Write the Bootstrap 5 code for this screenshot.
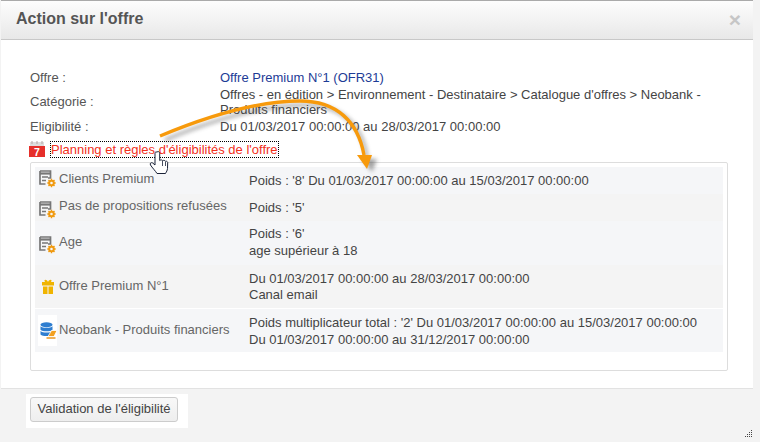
<!DOCTYPE html>
<html lang="fr">
<head>
<meta charset="utf-8">
<title>Action sur l'offre</title>
<link href="https://cdn.jsdelivr.net/npm/bootstrap@5.3.0/dist/css/bootstrap.min.css" rel="stylesheet">
<style>
html,body{height:100%;}
body{background:#f3f3f3;font-family:"Liberation Sans",Arial,sans-serif;font-size:13px;line-height:15px;color:#444;overflow:hidden;}
.stage{position:relative;width:760px;height:442px;overflow:hidden;}
.dlg{width:752px;margin-left:1px;}
.dlg-top{height:40px;border-top:1px solid #aaa;border-bottom:1px solid #c8c8c8;background:linear-gradient(#fdfdfd,#e8e8e8);padding:0 15px;}
.dlg-title{font-size:16px;font-weight:700;color:#555;line-height:36px;margin:0 0 2px;}
.dlg-x{font-size:21px;font-weight:700;color:#c6c6c6;line-height:1;margin:0 -3px 2px 0;}
.dlg-main{height:349px;background:#fff;padding:29px 25px 0 29px;border-bottom:1px solid #e2e2e2;}
.info-row{display:flex;align-items:center;}
.info-k{width:190px;color:#555;flex:none;}
.info-v{flex:1;}
.r1{height:16px;}
.r2{height:31px;margin-top:1px;}
.r3{height:16px;margin-top:1px;}
.offer{color:#1d3c96;}
.plan{margin-top:6px;height:18px;}
.cal{width:16px;height:17px;flex:none;margin:0 5px 0 -1px;}
.plan-link{color:#f2301c;text-decoration:none;outline:1px dotted #000;padding:0;line-height:15px;height:15px;white-space:nowrap;margin-left:1px;}
.box{margin-top:4px;height:209px;border:1px solid #ddd;border-radius:2px;padding:4px 4px 0 4px;}
.tr{display:flex;}
.tr-a{background:#f5f6f8;}
.tr-b{background:#f4f4f4;}
.h1r{height:27px;}
.h3r{height:44px;}
.h4r{height:43px;margin-bottom:1px;}
.tic{width:19px;flex:none;margin-left:3px;display:flex;align-items:center;justify-content:center;}
.tic-w{background:#fff;width:19px;height:31px;display:flex;align-items:center;padding-left:2px;}
.tic-w svg{flex:none;}
.tic-a{padding-bottom:3px;}
.tic-b{padding-top:4px;}
.tic-c{padding-top:3px;}
.tnm{width:192px;flex:none;padding:0 0 2px 2px;color:#666;display:flex;align-items:center;}
.tvl{flex:1;color:#444;display:flex;flex-direction:column;justify-content:center;}
.up{padding-bottom:4px;}
.up1{padding-bottom:4px;}
.raise{padding-bottom:3px;}
.gap-l{margin-top:2px;}
.gap-s{margin-top:1px;}
.dlg-foot{padding:5px 0 0 25px;}
.btn-wrap{display:inline-block;background:#fff;padding:3px 10px 6px 4px;line-height:0;}
.btn-val{font-size:13px;line-height:15px;color:#444;padding:3px 2px 5px;width:148px;height:25px;border:1px solid #ccc;border-radius:3px;background:linear-gradient(#f8f8f8,#eeeeee);white-space:nowrap;}
.over{position:absolute;left:0;top:0;pointer-events:none;}
</style>
</head>
<body>
<div class="stage">
  <div class="dlg">
    <div class="dlg-top d-flex justify-content-between align-items-center">
      <h1 class="dlg-title">Action sur l'offre</h1>
      <span class="dlg-x">×</span>
    </div>
    <div class="dlg-main">
      <div class="info-row r1"><div class="info-k">Offre :</div><div class="info-v offer">Offre Premium N°1 (OFR31)</div></div>
      <div class="info-row r2"><div class="info-k">Catégorie :</div><div class="info-v">Offres - en édition &gt; Environnement - Destinataire &gt; Catalogue d'offres &gt; Neobank - Produits financiers</div></div>
      <div class="info-row r3"><div class="info-k">Eligibilité :</div><div class="info-v">Du 01/03/2017 00:00:00 au 28/03/2017 00:00:00</div></div>
      <div class="d-flex align-items-center plan">
        <svg class="cal" viewBox="0 0 16 17"><rect x="1" y="1" width="14" height="4" fill="#ddd"/><path d="M3 0v3M8 0v3M13 0v3" stroke="#b5a5a5"/><rect y="5" width="16" height="11" fill="#e62f2a"/><text x="8" y="14.500" text-anchor="middle" fill="#fff" font-family="Liberation Sans" font-weight="700" font-size="10.500">7</text></svg>
        <a class="plan-link" href="#">Planning et règles d'éligibilités de l'offre</a>
      </div>
      <div class="box">
        <div class="tr tr-a h1r"><div class="tic tic-a"><svg width="18" height="18" viewBox="0 0 18 18"><use href="#doc"/></svg></div><div class="tnm up">Clients Premium</div><div class="tvl">Poids : '8' Du 01/03/2017 00:00:00 au 15/03/2017 00:00:00</div></div>
        <div class="tr tr-b h1r"><div class="tic tic-b"><svg width="18" height="18" viewBox="0 0 18 18"><use href="#doc"/></svg></div><div class="tnm up">Pas de propositions refusées</div><div class="tvl">Poids : '5'</div></div>
        <div class="tr tr-a h3r"><div class="tic tic-c"><svg width="18" height="18" viewBox="0 0 18 18"><use href="#doc"/></svg></div><div class="tnm up1">Age</div><div class="tvl raise"><div>Poids : '6'</div><div class="gap-l">age supérieur à 18</div></div></div>
        <div class="tr tr-b h4r"><div class="tic"><svg width="14" height="16" viewBox="0 0 14 16"><path d="M4 3C2 0 6 0 7 3c1-3 5-3 3 0z" fill="#f0b400"/><rect x="1" y="3" width="12" height="3.500" fill="#f0b400"/><rect x="2" y="7.500" width="4.500" height="7.500" fill="#f0b400"/><rect x="7.500" y="7.500" width="4.500" height="7.500" fill="#f0b400"/></svg></div><div class="tnm">Offre Premium N°1</div><div class="tvl"><div>Du 01/03/2017 00:00:00 au 28/03/2017 00:00:00</div><div class="gap-s">Canal email</div></div></div>
        <div class="tr tr-a h4r"><div class="tic"><div class="tic-w"><svg width="17" height="17" viewBox="0 0 17 17"><ellipse cx="6.500" cy="2.700" rx="6" ry="2.500" fill="#2f7ed0"/><path d="M.5 4.200c2 2 10 2 12 0v3.500c-2 2-10 2-12 0zM.5 9c2 2 10 2 12 0v3.500c-2 2-10 2-12 0z" fill="#2f7ed0"/><path d="M8 14.500l3.500-6h5.500l-3 6z" fill="#f2a020" stroke="#fff" stroke-width=".8"/><path d="M6.500 16h9" stroke="#e89010" stroke-width="1.400"/></svg></div></div><div class="tnm">Neobank - Produits financiers</div><div class="tvl"><div>Poids multiplicateur total : '2' Du 01/03/2017 00:00:00 au 15/03/2017 00:00:00</div><div class="gap-l">Du 01/03/2017 00:00:00 au 31/12/2017 00:00:00</div></div></div>
      </div>
    </div>
    <div class="dlg-foot"><span class="btn-wrap"><button type="button" class="btn btn-val">Validation de l'éligibilité</button></span></div>
  </div>

  <svg class="over" width="760" height="442" viewBox="0 0 760 442">
    <defs>
      <filter id="sh" x="-20%" y="-20%" width="140%" height="140%"><feGaussianBlur stdDeviation="2"/></filter>
      <g id="doc"><path d="M1 1h10.500v7H9M1 1v13h5.500" stroke="#777" stroke-width="1.700" fill="none"/><path d="M1 3.500h10.500" stroke="#777" stroke-width="2.200"/><path d="M3 7h6M3 10.500h4" stroke="#777" stroke-width="1.600" fill="none"/><circle cx="12.500" cy="13" r="2.300" fill="none" stroke="#f09a10" stroke-width="2"/><path d="M12.500 8.800v2M12.500 15.200v2M8.300 13h2M14.700 13h2M9.500 10l1.300 1.300M14.200 14.700l1.300 1.300M15.500 10l-1.300 1.300M10.800 14.700L9.500 16" stroke="#f09a10" stroke-width="1.400"/></g>
    </defs>
    <g filter="url(#sh)" opacity=".55" transform="translate(5 4)"><path d="M160 136C215 113 262 101 300 101C337 101 358 122 362 155" fill="none" stroke="#555" stroke-width="3"/><path d="M357 155h15l-5 13z" fill="#555"/></g>
    <path d="M160 136C215 113 262 101 300 101C337 101 358 122 364 155" fill="none" stroke="#f79a0c" stroke-width="3.400"/>
    <path d="M357 155h15l-5 14z" fill="#f79a0c"/>
    <g transform="translate(0 2)">
      <path d="M157 150c1.300-1 2.700 0 2.700 1.200v7.300c1-.8 2.400-.8 3 .2.900-.6 2.200-.4 2.700.6 1-.4 2.100.2 2.300 1.200l-.2 6c-.2 2.200-1 3-2 5h-8.500c-1.500-2.500-5-6-6.500-8.500-1-1.500.6-3 2.200-2l2.300 2v-11.800c0-.6.300-.9 .7-1.200z" fill="#fff" stroke="#1a2238" stroke-width="1"/>
      <path d="M162.500 159v5M165.500 160v4" stroke="#1a2238" stroke-width=".8"/>
    </g>
    <g fill="#444"><rect x="751" y="430" width="1" height="1"/><rect x="749" y="432" width="1" height="1"/><rect x="751" y="432" width="1" height="1"/><rect x="747" y="434" width="1" height="1"/><rect x="749" y="434" width="1" height="1"/><rect x="751" y="434" width="1" height="1"/><rect x="745" y="436" width="1" height="1"/><rect x="747" y="436" width="1" height="1"/><rect x="749" y="436" width="1" height="1"/><rect x="751" y="436" width="1" height="1"/></g>
  </svg>
</div>
<script src="https://cdn.jsdelivr.net/npm/bootstrap@5.3.0/dist/js/bootstrap.bundle.min.js"></script>
</body>
</html>
